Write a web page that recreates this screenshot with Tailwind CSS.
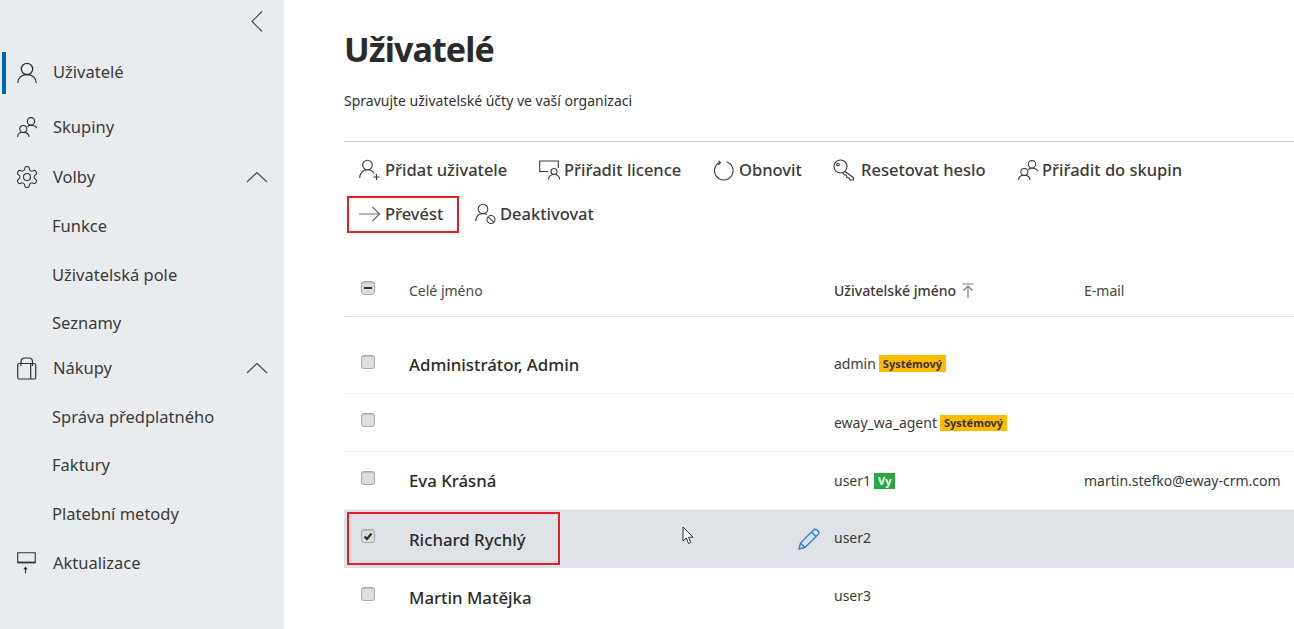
<!DOCTYPE html>
<html lang="cs">
<head>
  <meta charset="UTF-8">
  <title>Uživatelé</title>
  <script src="https://cdn.jsdelivr.net/npm/@tailwindcss/browser@4"></script>
</head>
<body class="overflow-hidden bg-white font-['Noto_Sans',sans-serif] text-[#323130]">
  <div class="flex h-[629px] w-[1294px] overflow-hidden">

    <!-- sidebar -->
    <nav class="relative h-full w-[284px] shrink-0 bg-[#e9ecef] pt-[52px] text-[16.500px] text-[#3b3a39]">
      <svg class="absolute left-[251px] top-[11px]" width="12" height="21" viewBox="0 0 12 21" fill="none" stroke="#4a4a4a" stroke-width="1.2"><path d="M11 .5 1 10.5l10 10"/></svg>

      <div class="ml-[2px] flex h-[42px] items-center border-l-4 border-[#0067b8] pl-[11px]">
        <svg class="mr-[16px] shrink-0" width="20" height="22" viewBox="0 0 20 22" fill="none" stroke="#323130" stroke-width="1.3"><circle cx="10" cy="7" r="5.7"/><path d="M.8 21c0-5 3.700-8.500 9.200-8.500s9.200 3.500 9.200 8.500"/></svg>
        <span class="mt-[-2px]">Uživatelé</span>
      </div>

      <div class="mt-[9px] flex h-[48px] items-center pl-[17px]">
        <svg class="mr-[16px] shrink-0" width="20" height="20" viewBox="0 0 20 20" fill="none" stroke="#323130" stroke-width="1.1"><circle cx="6.300" cy="12" r="3.500"/><path d="M.6 20c0-2.700 2.200-4.700 5.700-4.700s5.700 2 5.700 4.700"/><circle cx="14" cy="4.300" r="3.700"/><path d="M10.300 9.500c1-1 2.200-1.300 3.700-1.300 3 0 5.300 1.300 5.600 3"/></svg>
        <span>Skupiny</span>
      </div>

      <div class="relative mt-[2px] flex h-[48px] items-center pl-[16px]">
        <svg class="mr-[15px] shrink-0" width="22" height="22" viewBox="1.500 1.500 21 21" fill="none" stroke="#323130" stroke-width="1.050"><path d="M12.220 2h-.44a2 2 0 0 0-2 2v.18a2 2 0 0 1-1 1.730l-.43.25a2 2 0 0 1-2 0l-.15-.08a2 2 0 0 0-2.730.73l-.22.38a2 2 0 0 0 .73 2.730l.15.1a2 2 0 0 1 1 1.720v.51a2 2 0 0 1-1 1.740l-.15.09a2 2 0 0 0-.73 2.730l.22.38a2 2 0 0 0 2.730.73l.15-.08a2 2 0 0 1 2 0l.43.25a2 2 0 0 1 1 1.730V20a2 2 0 0 0 2 2h.44a2 2 0 0 0 2-2v-.18a2 2 0 0 1 1-1.730l.43-.25a2 2 0 0 1 2 0l.15.08a2 2 0 0 0 2.730-.73l.22-.39a2 2 0 0 0-.73-2.730l-.15-.08a2 2 0 0 1-1-1.740v-.5a2 2 0 0 1 1-1.740l.15-.09a2 2 0 0 0 .73-2.730l-.22-.38a2 2 0 0 0-2.730-.73l-.15.08a2 2 0 0 1-2 0l-.43-.25a2 2 0 0 1-1-1.730V4a2 2 0 0 0-2-2z"/><circle cx="12" cy="12" r="3.300"/></svg>
        <span>Volby</span>
        <svg class="absolute left-[246px] top-[18px]" width="22" height="12" viewBox="0 0 22 12" fill="none" stroke="#4a4a4a" stroke-width="1.2"><path d="M1 11 11 1.500 21 11"/></svg>
      </div>

      <div class="mt-[1px] flex h-[48px] items-center pl-[52px]">Funkce</div>
      <div class="mt-[1px] flex h-[48px] items-center pl-[52px]">Uživatelská pole</div>
      <div class="flex h-[48px] items-center pl-[52px]">Seznamy</div>

      <div class="relative flex h-[42px] items-center pl-[17px]">
        <svg class="mr-[16px] shrink-0" width="20" height="23" viewBox="0 0 20 23" fill="none" stroke="#323130" stroke-width="1.2"><rect x=".7" y="6.500" width="18" height="15.500" rx="1.500"/><path d="M13.700 7v15M4 9V4.500C4 2.500 5.500 1 8 1h3.500c2.500 0 4 1.500 4 3.500V9"/></svg>
        <span>Nákupy</span>
        <svg class="absolute left-[246px] top-[15px]" width="22" height="12" viewBox="0 0 22 12" fill="none" stroke="#4a4a4a" stroke-width="1.2"><path d="M1 11 11 1.500 21 11"/></svg>
      </div>

      <div class="mt-[4px] flex h-[48px] items-center pl-[52px]">Správa předplatného</div>
      <div class="flex h-[48px] items-center pl-[52px]">Faktury</div>
      <div class="mt-[1px] flex h-[48px] items-center pl-[52px]">Platební metody</div>

      <div class="mt-[1px] flex h-[48px] items-center pl-[17px]">
        <svg class="mr-[17px] shrink-0" width="19" height="22" viewBox="0 0 19 22" fill="none" stroke="#323130" stroke-width="1.1"><path d="M.7 10V.7h17.500V10"/><path d="M.2 10.500h18.600" stroke-width="1.800"/><path d="M8.500 21.500v-6M6.800 17.500l1.700-2.200 1.700 2.200"/></svg>
        <span>Aktualizace</span>
      </div>
    </nav>

    <!-- main -->
    <main class="min-w-0 flex-1 pl-[60px]">
      <h1 class="flex h-[98px] items-center text-[34px] font-bold leading-none tracking-[-0.9px] text-[#2b2b2b]">Uživatelé</h1>
      <p class="mt-[-7px] h-[20px] text-[14px] leading-[20px] text-[#323130]">Spravujte uživatelské účty ve vaší organizaci</p>

      <div class="mt-[30px] border-t border-[#c8c8c8] pt-[6px] text-[16.500px] font-medium text-[#3b3a39]">
        <!-- toolbar -->
        <div class="ml-[3px] flex h-[44px] items-center">
          <button class="flex w-[180px] items-center pl-[12px]">
            <svg class="mr-[4px] shrink-0" width="22" height="22" viewBox="0 0 22 22" fill="none" stroke="#3b3a39" stroke-width="1.100"><circle cx="8.500" cy="6" r="4.800"/><path d="M.7 19c0-5 3.200-8.200 7.800-8.200 3 0 5.300 1.400 6.600 3.700"/><path d="M17.500 15v6M14.500 18h6"/></svg>
            <span>Přidat uživatele</span>
          </button>
          <button class="flex w-[175px] items-center pl-[12px]">
            <svg class="mr-[3px] shrink-0" width="22" height="20" viewBox="0 0 22 20" fill="none" stroke="#3b3a39" stroke-width="1.100"><path d="M9 11.500H.7V1h18.600v7"/><circle cx="15" cy="11.500" r="3"/><path d="M9.500 19.500c0-3 2.200-5 5.500-5s5.500 2 5.500 5"/></svg>
            <span>Přiřadit licence</span>
          </button>
          <button class="flex w-[119px] items-center pl-[12px]">
            <svg class="mr-[5px] shrink-0" width="20" height="21" viewBox="0 0 20 21" fill="none" stroke="#3b3a39" stroke-width="1.100"><path d="M6 2.200A9.300 9.300 0 1 0 12.500 1.800M4.800 .8 6.500 2.800 4.300 4.800"/></svg>
            <span>Obnovit</span>
          </button>
          <button class="flex w-[185px] items-center pl-[12px]">
            <svg class="mr-[6px] shrink-0" width="22" height="22" viewBox="0 0 22 22" fill="none" stroke="#3b3a39" stroke-width="1.100"><circle cx="7.500" cy="7.500" r="6.500"/><circle cx="5" cy="5.500" r="1.300"/><path d="M12 12.500l8.500 6v2.500h-3.500l-1-2-2-.5-.5-2-2.500-1-1.500-2"/></svg>
            <span>Resetovat heslo</span>
          </button>
          <button class="flex items-center pl-[12px]">
            <svg class="mr-[4px] shrink-0" width="20" height="20" viewBox="0 0 20 20" fill="none" stroke="#3b3a39" stroke-width="1.100"><circle cx="6.300" cy="12" r="3.500"/><path d="M.6 20c0-2.700 2.200-4.700 5.700-4.700s5.700 2 5.700 4.700"/><circle cx="14" cy="4.300" r="3.700"/><path d="M10.300 9.500c1-1 2.200-1.300 3.700-1.300 3 0 5.300 1.300 5.600 3"/></svg>
            <span>Přiřadit do skupin</span>
          </button>
        </div>
        <div class="ml-[3px] flex h-[44px] items-center">
          <button class="flex h-[37px] w-[112px] items-center border-2 border-[#e81c24] pl-[10px]">
            <svg class="mr-[4px] shrink-0" width="22" height="16" viewBox="0 0 22 16" fill="none" stroke="#6e6e64" stroke-width="1.200"><path d="M0 8h20.500M13.500 1l7 7-7 7"/></svg>
            <span>Převést</span>
          </button>
          <button class="ml-[4px] flex items-center pl-[12px]">
            <svg class="mr-[3px] shrink-0" width="22" height="22" viewBox="0 0 22 22" fill="none" stroke="#3b3a39" stroke-width="1.100"><circle cx="8" cy="6" r="4.800"/><path d="M.7 18c0-4.500 3-7.500 7.300-7.500 1.500 0 2.800.4 3.900 1"/><circle cx="16" cy="16.500" r="4"/><path d="M13.300 13.800l5.400 5.400"/></svg>
            <span>Deaktivovat</span>
          </button>
        </div>
      </div>

      <!-- table -->
      <div class="mt-[29px] text-[14px] text-[#3b3a39]">
        <div class="grid h-[52px] grid-cols-[65px_425px_250px_1fr] items-center border-b border-[#dedfe6]">
          <div class="pb-[6px] pl-[17px]">
            <div class="flex h-[14px] w-[14px] items-center justify-center rounded-[3px] border border-[#aaaaaa] bg-[#dddddd] shadow-[inset_0_1px_1px_rgba(0,0,0,0.15)]"><div class="h-[2px] w-[8px] bg-[#333333]"></div></div>
          </div>
          <div class="text-[#484644]">Celé jméno</div>
          <div class="flex items-center gap-[6px] font-medium"><span>Uživatelské jméno</span>
            <svg width="12" height="16" viewBox="0 0 12 16" fill="none" stroke="#777777" stroke-width="1.100"><path d="M.5 1h11M6 15V3M1.500 7.500 6 3l4.500 4.500"/></svg>
          </div>
          <div class="text-[#484644]">E-mail</div>
        </div>

        <div class="mt-[19px] grid h-[58px] grid-cols-[65px_425px_250px_1fr] items-center border-b border-[#f1f1f1]">
          <div class="pb-[6px] pl-[17px]"><div class="h-[14px] w-[14px] rounded-[3px] border border-[#aaaaaa] bg-[#dddddd] shadow-[inset_0_1px_1px_rgba(0,0,0,0.15)]"></div></div>
          <div class="pt-[1px] text-[16.800px] font-medium text-[#2b2b2b]">Administrátor, Admin</div>
          <div class="flex items-center gap-[3px] pb-[2px]"><span>admin</span><span class="bg-[#ffbb00] px-[4px] text-[11px] font-bold leading-[17px] text-[#333333]">Systémový</span></div>
          <div></div>
        </div>

        <div class="grid h-[58px] grid-cols-[65px_425px_250px_1fr] items-center border-b border-[#f1f1f1]">
          <div class="pb-[6px] pl-[17px]"><div class="h-[14px] w-[14px] rounded-[3px] border border-[#aaaaaa] bg-[#dddddd] shadow-[inset_0_1px_1px_rgba(0,0,0,0.15)]"></div></div>
          <div></div>
          <div class="flex items-center gap-[3px]"><span>eway_wa_agent</span><span class="bg-[#ffbb00] px-[4px] text-[11px] font-bold leading-[16px] text-[#333333]">Systémový</span></div>
          <div></div>
        </div>

        <div class="grid h-[58px] grid-cols-[65px_425px_250px_1fr] items-center border-b border-[#f1f1f1]">
          <div class="pb-[6px] pl-[17px]"><div class="h-[14px] w-[14px] rounded-[3px] border border-[#aaaaaa] bg-[#dddddd] shadow-[inset_0_1px_1px_rgba(0,0,0,0.15)]"></div></div>
          <div class="pt-[1px] text-[16.800px] font-medium text-[#2b2b2b]">Eva Krásná</div>
          <div class="flex items-center gap-[3px]"><span>user1</span><span class="bg-[#28a745] px-[4px] text-[11px] font-bold leading-[16px] text-white">Vy</span></div>
          <div>martin.stefko@eway-crm.com</div>
        </div>

        <div class="relative grid h-[58px] grid-cols-[65px_425px_250px_1fr] items-center bg-[#dee2e6]">
          <div class="pb-[6px] pl-[17px]">
            <div class="flex h-[14px] w-[14px] items-center justify-center rounded-[3px] border border-[#aaaaaa] bg-[#dddddd] shadow-[inset_0_1px_1px_rgba(0,0,0,0.15)]">
              <svg width="10" height="9" viewBox="0 0 10 9" fill="none" stroke="#333333" stroke-width="2.400"><path d="M1.500 4.500 3.900 7 8.500 1.500"/></svg>
            </div>
          </div>
          <div class="pt-[1px] text-[16.800px] font-medium text-[#2b2b2b]">Richard Rychlý</div>
          <div class="pb-[3px]">user2</div>
          <div></div>
          <div class="absolute left-[3px] top-[2px] h-[53px] w-[213px] border-2 border-[#e81c24]"></div>
          <svg class="absolute left-[338px] top-[16px]" width="13" height="19" viewBox="0 0 13 19"><path d="M1 1v14l3.300-3 2.200 5.500 2.300-1-2.200-5.300H11z" fill="#ffffff" stroke="#333333" stroke-width="1"/></svg>
          <svg class="absolute left-[454px] top-[18px]" width="22" height="22" viewBox="0 0 22 22" fill="none" stroke="#2b7cd3" stroke-width="1.300"><path d="M1 21l1.500-6L15.500 2c1-1 2.500-1 3.500 0l1 1c1 1 1 2.500 0 3.500L7 19.500zM2.500 15 7 19.500M13.500 4l4.500 4.500"/></svg>
        </div>

        <div class="grid h-[58px] grid-cols-[65px_425px_250px_1fr] items-center">
          <div class="pb-[6px] pl-[17px]"><div class="h-[14px] w-[14px] rounded-[3px] border border-[#aaaaaa] bg-[#dddddd] shadow-[inset_0_1px_1px_rgba(0,0,0,0.15)]"></div></div>
          <div class="pt-[1px] text-[16.800px] font-medium text-[#2b2b2b]">Martin Matějka</div>
          <div class="pb-[3px]">user3</div>
          <div></div>
        </div>
      </div>
    </main>
  </div>
</body>
</html>
